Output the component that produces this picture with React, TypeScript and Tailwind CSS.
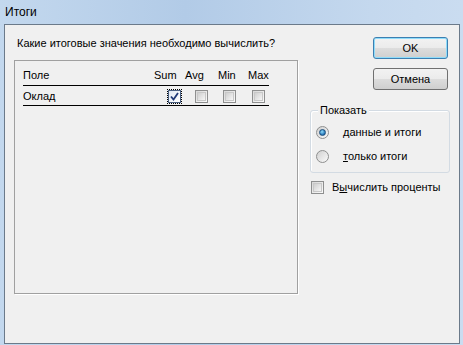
import React from 'react';

const font = { fontFamily: '"Liberation Sans", Arial, sans-serif' };

const btn =
  'w-[75px] h-[22px] rounded-[3px] border text-[11px] text-black flex items-center justify-center bg-[linear-gradient(#f2f2f2_0%,#ebebeb_50%,#dddddd_50%,#cfcfcf_100%)]';

const Check = ({ checked = false, focus = false }: { checked?: boolean; focus?: boolean }) => (
  <span
    className={
      'w-[13px] h-[13px] border flex items-center justify-center shrink-0 ' +
      (checked ? 'border-[#4a5f80] bg-[linear-gradient(135deg,#dfe8f5,#ffffff)]' : 'border-[#8e8f8f] bg-[linear-gradient(135deg,#d8d8d8,#fbfbfb)]') +
      (focus ? ' outline outline-1 outline-dotted outline-black' : '')
    }
  >
    {checked ? (
      <svg width="9" height="9" viewBox="0 0 9 9">
        <path d="M1 4.5 L3.5 7.5 L8 1" fill="none" stroke="#1f3a78" strokeWidth="1.8" />
      </svg>
    ) : (
      <span className="w-[9px] h-[9px] border border-[#c8c8c8] bg-[linear-gradient(135deg,#cfcfcf,#f6f6f6)]" />
    )}
  </span>
);

const Radio = ({ on = false }: { on?: boolean }) => (
  <span className="w-[13px] h-[13px] rounded-full border border-[#8e8f8f] bg-[linear-gradient(135deg,#d0d0d0,#fafafa)] flex items-center justify-center shrink-0">
    {on && <span className="w-[7px] h-[7px] rounded-full border border-[#1b4e7c] bg-[radial-gradient(circle_at_40%_35%,#8fdcfb,#1a6ab0_75%)]" />}
  </span>
);

export default function App() {
  return (
    <div
      className="w-[463px] h-[345px] flex flex-col bg-[linear-gradient(90deg,#c3d8ee,#b2cbe7_40%,#c4d8ee_80%,#cadcf0)]"
      style={font}
    >
      {/* title bar */}
      <div className="h-[24px] pl-[5px] flex items-center text-[12px] text-black shrink-0">Итоги</div>

      {/* client area */}
      <div className="ml-[4px] mr-[3px] mb-[1px] flex-1 border border-[#6b7a8a] bg-[#f0f0f0] flex pl-[9px] text-[11px] text-black">
        {/* left column */}
        <div className="w-[284px] flex flex-col">
          <div className="mt-[12px] ml-[3px] h-[13px] leading-[13px]">Какие итоговые значения необходимо вычислить?</div>
          <div className="mt-[10px] h-[234px] border border-[#a0a0a0] shadow-[1px_1px_0_#ffffff] pl-[8px]">
            <div className="w-[246px]">
              <div className="h-[25px] pt-[4px] flex items-center border-b border-black">
                <span className="w-[131px]">Поле</span>
                <span className="w-[31px]">Sum</span>
                <span className="w-[33px]">Avg</span>
                <span className="w-[30px]">Min</span>
                <span>Max</span>
              </div>
              <div className="h-[20px] pt-[1px] flex items-center border-b border-black">
                <span className="w-[145px]">Оклад</span>
                <Check checked focus />
                <span className="ml-[14px]"><Check /></span>
                <span className="ml-[15px]"><Check /></span>
                <span className="ml-[16px]"><Check /></span>
              </div>
            </div>
          </div>
        </div>

        {/* right column */}
        <div className="ml-[12px] w-[140px] flex flex-col">
          <div className="mt-[12px] ml-[63px] flex flex-col gap-[9px]">
            <div className={btn + ' border-[#3c7fb1] shadow-[inset_0_0_0_1px_#8fdcfa]'}>OK</div>
            <div className={btn + ' border-[#707070]'}>Отмена</div>
          </div>
          <div className="relative mt-[20px] h-[63px] border border-[#d3dbe3] rounded-[3px] shadow-[inset_1px_1px_0_#ffffff] pl-[5px] pt-[15px]">
            <span className="absolute left-[7px] top-[-7px] px-[2px] leading-[13px] bg-[#f0f0f0]">Показать</span>
            <div className="flex items-center h-[13px]">
              <Radio on />
              <span className="ml-[14px]"><u>д</u>анные и итоги</span>
            </div>
            <div className="flex items-center h-[13px] mt-[11px]">
              <Radio />
              <span className="ml-[14px]"><u>т</u>олько итоги</span>
            </div>
          </div>
          <div className="mt-[8px] ml-[1px] flex items-center h-[13px]">
            <Check />
            <span className="ml-[8px]">В<u>ы</u>числить проценты</span>
          </div>
        </div>
      </div>
    </div>
  );
}
